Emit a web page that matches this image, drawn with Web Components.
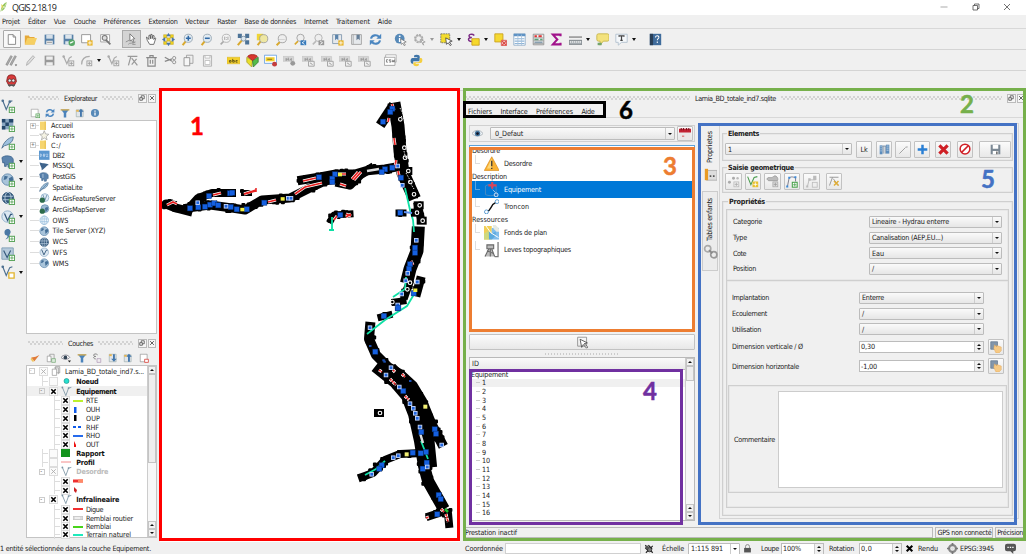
<!DOCTYPE html>
<html lang="fr">
<head>
<meta charset="utf-8">
<title>QGIS 2.18.19</title>
<style>
html,body{margin:0;padding:0;background:#fff;overflow:hidden}
body{width:1029px;height:554px;font:7.2px/9px "DejaVu Sans Condensed","DejaVu Sans","Liberation Sans",sans-serif;color:#222}
</style>
</head>
<body>
<qgis-window></qgis-window>
<script>
const I = {
new:'<path d="M4 2h6l3 3v9H4z" fill="#fff" stroke="#777"/><path d="M10 2v3h3" fill="none" stroke="#777"/>',
open:'<path d="M1 3h5l1 2h6v9H1z" fill="#e6a93a"/><path d="M1 14l3-8h12l-3 8z" fill="#f6cf62"/>',
save:'<path d="M2 2h12v12H2z" fill="#5780a8"/><path d="M4 2h8v5H4z" fill="#d5dfe8"/><path d="M4 9.500h8V14H4z" fill="#e8e8e8"/><path d="M5 11.500h6" stroke="#888"/>',
savegray:'<path d="M2 2h12v12H2z" fill="#999"/><path d="M4 3h8v4H4zM4 10h8v4H4z" fill="#eee"/>',
saveas:'<path d="M2 2h12v12H2z" fill="#5780a8"/><path d="M4 2h8v5H4zM4 10h7v4H4z" fill="#dde5ec"/><circle cx="12" cy="12" r="4" fill="#58a866"/><path d="M10 12.500l4-2" stroke="#fff" stroke-width="1.500"/>',
layout:'<path d="M2 2h11v10H2z" fill="#fff" stroke="#888"/><rect x="9" y="9" width="6.500" height="6.500" fill="#e9b62e"/><path d="M12.200 10v4.500M10 12.200h4.500" stroke="#fff"/>',
composer:'<path d="M2 2h11v9H2z" fill="#fff" stroke="#999"/><path d="M6 6l8 8" stroke="#777" stroke-width="2.200"/><circle cx="7" cy="6" r="3" fill="#ddd" stroke="#777" stroke-width="1.300"/>',
pan0:'<path d="M6 1l6 6-2.500.3L11 11l-1.500.7L8 8.500 6 10z" fill="#fff" stroke="#666"/><path d="M1 11l4-2M4 14c2-3 5 0 9-3M9 14h4" stroke="#888" fill="none"/>',
hand:'<path d="M4 9L3 5l1.500 1L6 8V3l1.500-.5L8 7l.5-5.500L10 2v5l1-4 1.500.5L12 8l1.500-2 1 .5L12 14H7z" fill="#fff" stroke="#444" stroke-width=".9"/>',
pansel:'<path d="M2 2h4v4H2zM10 2h4v4h-4zM6 6h4v4H6zM2 10h4v4H2zM10 10h4v4h-4z" fill="#f0d21c" stroke="#b5981a" stroke-width=".5"/><path d="M8 0l3 4H5zM8 16l3-4H5zM0 8l4-3v6zM16 8l-4-3v6z" fill="#4b77a9"/>',
zin:'<path d="M6 10l-4 5" stroke="#d9a92e" stroke-width="2.500"/><circle cx="9" cy="6.500" r="5" fill="#e2ebf2" stroke="#90a0ad"/><path d="M9 3.500v6M6 6.500h6" stroke="#3069a6" stroke-width="1.900"/>',
zout:'<path d="M6 10l-4 5" stroke="#d9a92e" stroke-width="2.500"/><circle cx="9" cy="6.500" r="5" fill="#e2ebf2" stroke="#90a0ad"/><path d="M6 6.500h6" stroke="#3069a6" stroke-width="1.900"/>',
z11:'<path d="M6 10l-4 4" stroke="#aaa" stroke-width="2"/><circle cx="9" cy="6.500" r="5" fill="#f2f2f2" stroke="#aaa"/><path d="M7 4.500v4M11 4.500v4M9 5v1M9 7.500v1" stroke="#999"/>',
zfull:'<path d="M1 1h5v5H1zM10 1h5v5h-5zM10 9h5v5h-5z" fill="#4d7397"/><path d="M6 9l-5 6" stroke="#d9a92e" stroke-width="2.500"/><circle cx="8" cy="7" r="3" fill="#dce7ef" stroke="#72899c"/>',
zsel:'<path d="M6 10l-4 5" stroke="#d9a92e" stroke-width="2.500"/><rect x="1" y="1" width="8" height="8" fill="#efd535"/><circle cx="9.500" cy="7" r="5" fill="#eee7a2" stroke="#999"/>',
zlayer:'<path d="M6 11l-4 4" stroke="#d9a92e" stroke-width="2.500"/><circle cx="9" cy="7" r="5" fill="#eee" stroke="#999"/><path d="M5 8h7" stroke="#ccc"/>',
zlast:'<path d="M5 10l-4 4" stroke="#d9a92e" stroke-width="2"/><circle cx="8" cy="6" r="4.500" fill="#eee" stroke="#999"/><path d="M8 9h7v6H8z" fill="#387bbb"/><path d="M13 10l-3 2 3 2" stroke="#fff" fill="none"/>',
znext:'<path d="M5 10l-4 4" stroke="#bbb" stroke-width="2"/><circle cx="8" cy="6" r="4.500" fill="#eee" stroke="#aaa"/><path d="M8 9h7v6H8z" fill="#999"/><path d="M10 10l3 2-3 2" stroke="#fff" fill="none"/>',
bm:'<path d="M2 2h11v11H2z" fill="#e6e9ec" stroke="#7b93aa"/><path d="M5 2v7l2-2 2 2V2z" fill="#5b83ab"/><rect x="9" y="9" width="6.500" height="6.500" fill="#e9b62e"/><path d="M12.200 10v4.500M10 12.200h4.500" stroke="#fff"/>',
bm2:'<path d="M2 2h12v12H2z" fill="#e6e9ec" stroke="#999"/><path d="M8 2v7l2-2 2 2V2z" fill="#667f97"/><path d="M4 2v12" stroke="#aaa"/>',
refresh:'<path d="M2.500 7a5.500 5 0 0 1 10-2M13.500 9a5.500 5 0 0 1-10 2" fill="none" stroke="#4b86c0" stroke-width="2.600"/><path d="M15 1v6H9zM1 15V9h6z" fill="#4b86c0"/>',
info:'<circle cx="7" cy="7" r="6" fill="#5689b8"/><path d="M7 6v5M7 3v2" stroke="#fff" stroke-width="2"/><path d="M8 7l7 4-3 .8 2 3-1.500.7-1.600-3L9 14z" fill="#fff" stroke="#666" stroke-width=".8"/>',
info2:'<circle cx="8" cy="8" r="6.500" fill="#5689b8"/><path d="M8 7v5M8 4v2" stroke="#fff" stroke-width="2"/>',
gear:'<circle cx="7" cy="7" r="4.500" fill="#ddd" stroke="#aaa" stroke-width="2.500" stroke-dasharray="2.500 1"/><circle cx="7" cy="7" r="3.500" fill="#eee" stroke="#aaa"/><path d="M9 8l6 3-3 1 1 3z" fill="#fff" stroke="#999"/>',
sel:'<path d="M1 1h11v11H1z" fill="#f3dc2d" stroke="#666" stroke-dasharray="2 1"/><path d="M7 6l8 4-3.500 1 2.500 3.500-1.500 1-2.500-3.500L8 14z" fill="#fff" stroke="#333" stroke-width=".9"/>',
eps:'<path d="M9 3C6 0 1 2 3 4.500c1 1 3 1 3 1-6 0-5 5 0 5" fill="none" stroke="#7b2b85" stroke-width="1.800"/><path d="M6 7h9v8H6z" fill="#f6d82c" stroke="#c99d16"/>',
unsel:'<path d="M1 1h10v10H1z" fill="#f5d933" stroke="#c99d16"/><path d="M9 9h6.500v6.500H9z" fill="#f2c9c9" stroke="#d9453f"/><path d="M10 10l5 5M15 10l-5 5" stroke="#d9453f" stroke-width="1.300"/>',
table:'<path d="M1 1h14v14H1z" fill="#fff" stroke="#88a8c6"/><path d="M1 2.500h14" stroke="#5e92c4" stroke-width="3"/><path d="M2 7h12M2 10h12M2 13h12" stroke="#8db4d8" stroke-width="1.300"/><path d="M6 2v13M10.500 2v13" stroke="#a8c2da"/>',
calc:'<path d="M1.500 1.500h13v13h-13z" fill="#eee" stroke="#888"/><path d="M3 4h3M8 4h4" stroke="#d33" stroke-width="2.500"/><path d="M2 6h12M2 9.500h12M2 13h12" stroke="#888" stroke-width=".8"/><path d="M3 8h5M10 8h3" stroke="#5aa47a" stroke-width="2"/><path d="M3 11.500h10" stroke="#8aa0b0" stroke-width="2"/>',
sigma:'<path d="M13 4V2H3.500L9 8l-5.500 6H13v-2" fill="none" stroke="#a1138b" stroke-width="2.500"/>',
ruler:'<path d="M0 9h16v5H0z" fill="#aab1b5" stroke="#747b80"/><path d="M0 5h16" stroke="#7b7b7b" stroke-width="1.500"/><path d="M2 10v2M4.500 10v2M7 10v2M9.500 10v2M12 10v2M14 10v2" stroke="#fff"/>',
tip:'<path d="M3 1h11a2 2 0 0 1 2 2v5a2 2 0 0 1-2 2H9l-4 5v-5H3a2 2 0 0 1-2-2V3a2 2 0 0 1 2-2z" fill="#f3e27d" stroke="#c3b144"/><path d="M2 12h5v3H2z" fill="#72a36c"/>',
text:'<path d="M1 1.500h14v10H8L4 15v-3.500H1z" fill="#f4f7fa" stroke="#adbccb"/><path d="M5 4.500V3.500h6v1M8 3.500V9M6.500 9h3" stroke="#444" stroke-width="1.500" fill="none"/>',
help:'<path d="M1 1h14v14H1z" fill="#3f6c9c"/><path d="M1 1h4v14H1z" fill="#293f57"/><path d="M8 5.500c0-3 5-2.500 4 .5-.5 1-1.800 1-1.800 3M10.200 10.500v1.700" fill="none" stroke="#fff" stroke-width="1.300"/>',
pens:'<path d="M1 13L7 2l2 1-6 11zM6 13l6-11 2 1-6 11z" fill="#aaa" stroke="#777" stroke-width=".6"/><path d="M12 13h3l-1.500 2z" fill="#555"/>',
pen:'<path d="M3 14l1-4 7-8 2 2-7 8z" fill="#ddd" stroke="#aaa"/>',
addg:'<path d="M2 3l4 9 3-7 3-2" fill="none" stroke="#aaa" stroke-width="1.500"/><circle cx="2" cy="3" r="1.500" fill="#aaa"/><rect x="8.500" y="8.500" width="6" height="6" fill="#eee" stroke="#999"/><path d="M11.500 9.500v4M9.500 11.500h4" stroke="#999"/>',
curve:'<path d="M2 13C2 6 5 3 12 3" fill="none" stroke="#aaa" stroke-width="1.500"/><rect x="8.500" y="8.500" width="6" height="6" fill="#eee" stroke="#999"/><path d="M11.500 9.500v4M9.500 11.500h4" stroke="#999"/>',
node:'<path d="M3 14L6 3M2 3h12M7 5l7 9M13 6l-6 7" fill="none" stroke="#999" stroke-width="1.500"/>',
trash:'<path d="M3.500 4.500h9V15h-9zM1.500 4.500h13M6 4V2h4v2M6.500 7v5M9.500 7v5" fill="none" stroke="#888" stroke-width="1.400"/>',
cut:'<path d="M1 4l9 5M1 9l9-3" stroke="#888" stroke-width="1.500"/><circle cx="12.500" cy="5" r="2" fill="none" stroke="#888"/><circle cx="12.500" cy="10" r="2" fill="none" stroke="#888"/>',
copy:'<path d="M5.500 1.500h8v10h-8z" fill="#eee" stroke="#999"/><path d="M2.500 4.500h7v10h-7z" fill="#f6f6f6" stroke="#888"/>',
paste:'<path d="M3 2h10v13H3z" fill="#eee" stroke="#aaa"/><path d="M5 2h6v3H5zM5 8h6v5H5z" fill="#fff" stroke="#bbb"/>',
lab:'<path d="M0 4h16v8H0z" fill="#f3cf2b" stroke="#d3b01c" stroke-width=".6"/><path d="M3 8h2v2H3zM7 6v4h2V8H7M13 8h-2v2h2" fill="none" stroke="#544a18"/>',
pie:'<path d="M8 8L1 4v6l6 6z" fill="#e9de2c" stroke="#aaa12a"/><path d="M8 8l7-4v6l-6 6z" fill="#53bb49" stroke="#397d31"/><path d="M8 8L2 3c2-3 10-3 12 0z" fill="#d8362d" stroke="#9d2620"/>',
lab2:'<path d="M.5 1.500h15v10H.5z" fill="#fff" stroke="#5d9ae0"/><path d="M2 4h11v5H2z" fill="#f1cf2c"/><path d="M4 6.500h6" stroke="#6b5d13"/><circle cx="13" cy="12.500" r="3" fill="#c43c3c"/>',
labg:'<path d="M0 3h13v6H0z" fill="#d5d5d5" stroke="#bbb" stroke-width=".6"/><path d="M3 6h2v1.500H3M6.500 4.500v3h1.500M11 6H9.500v1.500H11" fill="none" stroke="#888"/><circle cx="12" cy="11.500" r="3" fill="#999"/>',
labh:'<path d="M0 3h13v6H0z" fill="#d5d5d5" stroke="#bbb" stroke-width=".6"/><path d="M3 6h2v1.500H3M6.500 4.500v3h1.500M11 6H9.500v1.500H11" fill="none" stroke="#888"/><path d="M8 9h7v6H8z" fill="#eee" stroke="#999"/><path d="M10 11l3 2" stroke="#888"/>',
csw:'<path d="M2 1h13v9H2z" fill="#fff" stroke="#aaa"/><path d="M.5 4h13v10H.500z" fill="#fff" stroke="#999"/><path d="M5 7H3v3h2M8.500 7h-2v1.500h2V10h-2M10 7l.8 3 .8-2 .8 2 .6-3" fill="none" stroke="#555" stroke-width=".8"/>',
py:'<path d="M8 1c-3 0-3 1-3 3h4v1H3C0 5 0 12 3 12h1V9h6c2 0 2-1 2-5 0-2-1-3-4-3z" fill="#3f75a8"/><path d="M8 15c3 0 3-1 3-3H7v-1h6c3 0 3-7 0-6h-1v3c0 1-1 2-2 2H6c-2 0-2 1-2 2 0 2 1 3 4 3z" fill="#f4cf41"/>',
robot:'<path d="M3 4c1-4 9-4 10 0l1 5-2 4H4L2 9z" fill="#d83a3a" stroke="#7b1c1c"/><circle cx="5.800" cy="8" r="1.900" fill="#eee" stroke="#333" stroke-width=".8"/><circle cx="10.200" cy="8" r="1.900" fill="#eee" stroke="#333" stroke-width=".8"/><path d="M4 13l1 2 3-1 3 1 1-2" stroke="#333" fill="#777"/>',
vplus:'<path d="M2 2l4 10 4-9 3-1" fill="none" stroke="#4c6f8f" stroke-width="1.300"/><circle cx="2" cy="2" r="1.500" fill="#4c6f8f"/><circle cx="10" cy="3" r="1.500" fill="#4c6f8f"/>#P',
raster:'<path d="M1 1h13v12H1z" fill="#8aa7c2"/><path d="M1 1h4v4H1zM9 1h5v4H9zM5 5h4v4H5zM1 9h4v4H1z" fill="#24476b"/>#P',
feather:'<path d="M1 14C3 7 8 2 14 1c0 5-4 9-10 10z" fill="#9ec1de" stroke="#4c6f8f"/><path d="M1 15L12 3" stroke="#4c6f8f"/>',
featherp:'<path d="M1 14C3 7 8 2 14 1c0 5-4 9-10 10z" fill="#9ec1de" stroke="#4c6f8f"/>#P',
eleph:'<path d="M1 3c3-3 12-3 13 2v5h-2l-1 4H8v-3H6v2H4V9H2z" fill="#5b83ad" stroke="#375f88" stroke-width=".8"/><path d="M6 3v6" stroke="#cfe0ee"/>',
elephp:'<path d="M1 3c3-3 12-3 13 2v5h-2l-1 4H8v-3H6v2H4V9H2z" fill="#5b83ad" stroke="#375f88" stroke-width=".8"/>#P',
globe:'<circle cx="8" cy="8" r="6.700" fill="#a9c4da" stroke="#5d86ab"/><path d="M4 3l4 1-2 3-3 1zM9 6l4-2 1 4-4 4z" fill="#456f97"/>',
globep:'<circle cx="7.500" cy="7.500" r="6.500" fill="#a9c4da" stroke="#5d86ab"/><path d="M4 3l4 1-2 3-3 1zM9 6l4-2 1 4-4 4z" fill="#456f97"/>#P',
wcs:'<circle cx="8" cy="8" r="6.500" fill="#34587b" stroke="#34587b"/><path d="M2 6h12M2 10h12M8 2v12" stroke="#b9cee0"/><ellipse cx="8" cy="8" rx="3.500" ry="6.500" fill="none" stroke="#b9cee0"/>',
wcsp:'<circle cx="8" cy="8" r="6.500" fill="#34587b" stroke="#34587b"/><path d="M2 6h12M2 10h12" stroke="#b9cee0"/><ellipse cx="8" cy="8" rx="3.500" ry="6.500" fill="none" stroke="#b9cee0"/>#P',
ows:'<circle cx="8" cy="8" r="6.500" fill="#edf5fb" stroke="#8fb6d6"/><path d="M2 6h12M2 10h12M8 2v12" stroke="#9cc0dd"/><ellipse cx="8" cy="8" rx="3.500" ry="6.500" fill="none" stroke="#9cc0dd"/>',
wfs:'<circle cx="8" cy="8" r="6.500" fill="#dce8f2" stroke="#8aabc7"/><path d="M4 4l3.500 8L11 5h2" fill="none" stroke="#34587b" stroke-width="1.400"/>',
wfsp:'<circle cx="7.500" cy="7.500" r="6.500" fill="#dce8f2" stroke="#8aabc7"/><path d="M4 4l3.500 8L11 5h2" fill="none" stroke="#34587b" stroke-width="1.400"/>#P',
comma:'<path d="M4 5a3.500 3.500 0 1 1 6 2c0 3-2 5-5 6 2-2 3-3 2-4.500C5 8.500 4 7 4 5z" fill="#4b78a5"/>#P',
vl:'<path d="M1 1h13v13H1z" fill="#b5cadb" stroke="#7d9bb4"/><path d="M3 4l4 8 4-8" fill="none" stroke="#34587b" stroke-width="1.300"/>#P',
vy:'<path d="M2 2l4 10 4-9 3-1" fill="none" stroke="#4c6f8f" stroke-width="1.300"/><circle cx="2" cy="2" r="1.500" fill="#4c6f8f"/><path d="M9 9h6v6H9z" fill="#fff" stroke="#e2b42d" stroke-width="1.500"/>',
pg:'<path d="M2 2h11v12H2z" fill="#fff" stroke="#999"/>#P',
funnel:'<path d="M1 2h14l-5 6v7H6V8z" fill="#4b83bb"/><path d="M1 2h14v2H1z" fill="#e0b04b"/>',
collapse:'<path d="M2 3h11v11H2z" fill="#e2e6ea" stroke="#9aa"/><path d="M8 14V6H5l4.500-5L14 6h-3v8z" fill="#4477ab"/><path d="M2 3h4v3H2z" fill="#e6b54f"/>',
expand:'<path d="M2 2h11v12H2z" fill="#e2e6ea" stroke="#9aa"/><path d="M8 2v7H5l4.500 5L14 9h-3V2z" fill="#4477ab"/><path d="M2 2h4v3H2z" fill="#e6b54f"/>',
folder:'<path d="M2 1h11v14H2z" fill="#f6d56f"/><path d="M11 1h3v14h-3z" fill="#ecc75c"/>',
star:'<path d="M8 1l2 5 5 .5-4 3.500 1.300 5L8 12l-4.300 3L5 10 1 6.500 6 6z" fill="#f5f3e4" stroke="#999"/>',
db2:'<path d="M0 1h16v14H0z" fill="#5b97cf"/><path d="M2 6v4c3 0 3-4 0-4zM7 6v4c3 0 3-2 0-2 3 0 3-2 0-2zM11 6.500c3-1 3 1 0 3.500h3" stroke="#cfe2f4" fill="none"/>',
mssql:'<path d="M1 2c4 3 9 0 14 4-4 0-5 5-11 8 1-4-3-7-3-12z" fill="#3f648c"/>',
arcf:'<circle cx="9" cy="7" r="6" fill="#e2edf5" stroke="#7ba0c0"/><path d="M6 3l3 8 3-8" stroke="#456f97" fill="none"/><circle cx="5" cy="11" r="4" fill="#2d6c4c"/>',
arcm:'<circle cx="9" cy="7" r="6" fill="#9dbbd3" stroke="#5d86ab"/><path d="M9 6l4-2 1 4-4 4z" fill="#456f97"/><circle cx="5" cy="11" r="4" fill="#2d6c4c"/>',
brush:'<path d="M2 7l5 6 8-10-6 3z" fill="#e07b39"/><path d="M2 7l5 6-3 1-3-4z" fill="#f0c25c"/>',
group:'<path d="M6 2h7v9H6z" fill="#eee" stroke="#888"/><path d="M2 5h6v9H2z" fill="#fff" stroke="#888"/><path d="M9 9h6v6H9z" fill="#dcebdc" stroke="#68a068"/>',
grp:'<path d="M7 1h7v10H7z" fill="#eee" stroke="#888"/><path d="M2 5h7v10H2z" fill="#fff" stroke="#888"/><path d="M5 3h7v10" fill="none" stroke="#999"/>',
eye:'<path d="M0 8c4-6 12-6 16 0-4 5-12 5-16 0z" fill="#f3f6f8" stroke="#8d99a3"/><circle cx="8" cy="8" r="4" fill="#47789f"/><circle cx="8" cy="8" r="2" fill="#112"/>',
eyed:'<path d="M0 7c4-5 11-5 14 0-3 4-10 4-14 0z" fill="#fff" stroke="#556"/><circle cx="7" cy="7" r="3" fill="#345"/><path d="M11 12h5l-2.500 3z" fill="#222"/>',
expr:'<path d="M9 3C6 0 1 2 3 4.500c1 1 3 1 3 1-5 0-4 4 0 4" fill="none" stroke="#777" stroke-width="1.400"/><path d="M8 9h6v6H8z" fill="#eee" stroke="#a78bb0"/>',
rem:'<path d="M2 2h11v12H2z" fill="#fff" stroke="#888"/><path d="M9 10h6v5H9z" fill="#fff" stroke="#d9453f" stroke-width="1.300"/>',
v:'<path d="M2 2l5 12L11 3l4-1" fill="none" stroke="#7892a2" stroke-width="1.200"/><circle cx="2" cy="2" r="1.300" fill="#7892a2"/><circle cx="11" cy="3" r="1.300" fill="#7892a2"/>',
x:'<path d="M3 3l10 10M13 3L3 13" stroke="#000" stroke-width="3.600"/>',
xg:'<path d="M3 3l10 10M13 3L3 13" stroke="#aaa" stroke-width="2"/>',
xs:'<path d="M3 3l10 10M13 3L3 13" stroke="#333" stroke-width="2"/>',
flo:'<path d="M2 7h7v7H2z" fill="#eee" stroke="#333" stroke-width="1.800"/><path d="M6 6V2h8v8h-4" fill="none" stroke="#333" stroke-width="1.800"/>',
warn:'<path d="M8 .8L15.700 15H.3z" fill="#f9b233" stroke="#d98a1b" stroke-width=".7"/><path d="M8 2.500L3 13h5z" fill="#fdd77a"/><path d="M8 5v5.500M8 12v1.500" stroke="#333" stroke-width="1.300"/>',
equip:'<path d="M1.500 4c3-2 8-2 11 0v9c-3 1.500-8 1.500-11 0z" fill="none" stroke="#5590c0" stroke-width=".8"/><path d="M8.500 0v7M4.500 3.500h8.500" stroke="#d9455a" stroke-width="2.200"/><circle cx="12.500" cy="13.300" r="2" fill="#2978c7" stroke="#cfe4f7"/><path d="M9 8l3 3" stroke="#9cc3e6"/>',
tron:'<path d="M3 13C8 12 6 6 13 3" fill="none" stroke="#111" stroke-width="1.600"/><circle cx="2.500" cy="13.300" r="2" fill="#fff" stroke="#5a9bd0"/><circle cx="13.500" cy="2.700" r="2" fill="#fff" stroke="#5a9bd0"/>',
map:'<path d="M0 1h8v14H0z" fill="#f2cf56"/><path d="M8 3h8v12H8z" fill="#7fbdec"/><path d="M9 0h3l4 4v3h-3l-3-3z" fill="#e4e9e4"/><path d="M4 6l4 3 4-2v4l-4 4H5z" fill="#5aa9dd"/><path d="M0 9l5-3v9H0z" fill="#cfd97e"/><path d="M2 1l5 7 8 5" stroke="#fff" fill="none"/>',
topo:'<path d="M1 15L5 7h3l3 8M6.500 7v8M3 9l7 3M3 3h7v4H3z" stroke="#666" stroke-width="1.100" fill="#bbb"/><path d="M14.500 0v15H11" stroke="#777" stroke-width="1.300" fill="none"/>',
cal:'<path d="M1 1h14v14H1z" fill="#ebe6e6"/><path d="M0 1h16v5H0z" fill="#c32232"/><path d="M3 0v3M6 0v3M10 0v3M13 0v3" stroke="#7c1420" stroke-width="1.400"/><path d="M4 10h3v2H4z" fill="#d88"/>',
cursor:'<path d="M2 1.500h11v11H2z" fill="none" stroke="#888" stroke-width="1"/><path d="M5 4l9 4.500-4 1 4.500 4-1.500 1.500-4-4.500-2 3.500z" fill="#fff" stroke="#444"/>',
hilite:'<path d="M1 2h4v13H1z" fill="#5b8cbc"/><path d="M10 1h5v13h-5z" fill="#5b8cbc"/><path d="M2 4h2M2 7h2M2 10h2M11 3h3M11 6h3M11 9h3" stroke="#dbe6f0"/><path d="M5 3h5M6 14V3M9 14V3" stroke="#6f87a0" fill="none" stroke-width="1.300"/>',
line:'<path d="M2 14L11 5" stroke="#999" stroke-width="1.300"/><path d="M11 5l3-1" stroke="#bbb" stroke-width="2"/>',
plus:'<path d="M8 1v14M1 8h14" stroke="#2a7fd4" stroke-width="3.600"/>',
del:'<path d="M2 2l12 12M14 2L2 14" stroke="#cf1f25" stroke-width="4.600"/>',
forbid:'<circle cx="8" cy="8" r="6.500" fill="#fff" stroke="#d01f26" stroke-width="2"/><path d="M3.500 12.500l9-9" stroke="#d01f26" stroke-width="2"/>',
floppy:'<path d="M1 1h14v14H1z" fill="#7b8894"/><path d="M4 1h8v6H4zM4 10h8v5H4z" fill="#fff"/><path d="M9 11h2v4H9z" fill="#555"/>',
pts:'<circle cx="3" cy="9" r="1.800" fill="#aaa"/><circle cx="8" cy="4" r="1.800" fill="#aaa"/><circle cx="13" cy="4" r="1.500" fill="#bbb"/><rect x="8.500" y="8.500" width="6" height="6" fill="#eee" stroke="#bbb"/><path d="M11.500 9.500v4M9.500 11.500h4" stroke="#aaa"/>',
vg:'<path d="M2 2l4 10 4-9 4-1" fill="none" stroke="#4a9b4e" stroke-width="1.300"/><rect x="8" y="8" width="7" height="7" fill="#e9c12e"/><path d="M11.500 9v5M9 11.500h5" stroke="#fff"/>',
poly:'<path d="M1 5c2-4 5 0 8-3s7 2 5 5H3z" fill="#bbb" stroke="#999"/><rect x="8.500" y="8.500" width="6" height="6" fill="#ddd" stroke="#aaa"/><path d="M11.500 9.500v4M9.500 11.500h4" stroke="#999"/>',
addl:'<path d="M3 14L5 4C8 1 10 3 13 3v5" fill="none" stroke="#667" stroke-width="1"/><path d="M1.500 13h2.500v2.500H1.500zM4 2h2.500v2.500H4zM11.500 1.500H14V4h-2.500z" fill="#3b8ad9"/><rect x="9" y="9" width="6" height="6" fill="#fff" stroke="#48a04b" stroke-width="1.300"/><path d="M12 10v4M10 12h4" stroke="#48a04b"/>',
addlg:'<path d="M3 14L5 6h8V3" fill="none" stroke="#bbb" stroke-width="1.200"/><path d="M1.500 13H4v2.500H1.500zM4 4h3v3H4zM10 1h4v5h-4z" fill="#bbb"/><rect x="9" y="9" width="6" height="6" fill="#eee" stroke="#bbb"/>',
nodey:'<path d="M2 14L6 3M2 3h12M7 5l7 9" fill="none" stroke="#999" stroke-width="1.300"/><path d="M8 8l6 6M14 8l-6 6" stroke="#e0ad35" stroke-width="2"/>',
tap:'<path d="M1 1h9v10H1z" fill="#8296ab" stroke="#687b8f"/><path d="M6 5l3 3V6l6 2v5l-3 3H8L5 10z" fill="#f6c984" stroke="#dfa558" stroke-width=".6"/>',
chain:'<circle cx="5" cy="5" r="3.300" fill="none" stroke="#aaa" stroke-width="1.800"/><circle cx="11.500" cy="11.500" r="3.300" fill="none" stroke="#999" stroke-width="1.800"/><path d="M6.500 6.500L10 10" stroke="#888" stroke-width="2"/>',
tabi:'<path d="M3 3h13v12H3z" fill="#ddd" stroke="#aaa"/><path d="M1 1h4v14H1z" fill="#e99b23"/><path d="M7 9h2v2H7zM11 9h2v2h-2z" fill="#555"/>',
bug:'<path d="M2 2l12 12M2 6l5 5M7 2l6 6M14 3L3 14" stroke="#222" stroke-width="1.700"/><circle cx="9" cy="9" r="3.500" fill="#777" stroke="#111"/><circle cx="5" cy="5" r="2.500" fill="#555"/>',
lock:'<path d="M2 7h12v8H2z" fill="#555"/><path d="M4.500 7V4.500a3.500 3.500 0 0 1 7 0V7" fill="none" stroke="#888" stroke-width="1.700"/>',
crs:'<circle cx="8" cy="8" r="5" fill="none" stroke="#888" stroke-width="3.200"/><circle cx="8" cy="8" r="2" fill="#ddd"/><path d="M8 0v4M8 12v4M0 8h4M12 8h4" stroke="#777" stroke-width="2.500"/>',
bubble:'<path d="M3 1h10a3 3 0 0 1 3 3v5a3 3 0 0 1-3 3h-1v4l-4-4H3a3 3 0 0 1-3-3V4a3 3 0 0 1 3-3z" fill="#555"/><path d="M3.500 6.500h2M7 6.500h2M10.500 6.500h2" stroke="#fff" stroke-width="1.800"/>',
logo:'<path d="M1 15C2 8 8 2 15 0c0 6-6 13-12 13z" fill="#8cc152"/><path d="M1 15L8 6l1 3 5-7" stroke="#fff" fill="none"/><path d="M3 3l5 3-4 4z" fill="#d9d34a"/>',
min:'<path d="M1 8h14" stroke="#555"/>',
max:'<path d="M2 5h9v9H2z" fill="none" stroke="#444" stroke-width="1.500"/><path d="M5 5V2h9v9h-3" fill="none" stroke="#444" stroke-width="1.500"/>',
close:'<path d="M2 2l12 12M14 2L2 14" stroke="#444" stroke-width="1.500"/>'
};
const PLUS='<rect x="9.500" y="9.500" width="6" height="6" fill="#fff" stroke="#5aa45a" stroke-width="1.200"/><path d="M12.500 10.500v4M10.500 12.500h4" stroke="#5aa45a"/>';
const def=(name,render)=>customElements.define(name,class extends HTMLElement{
  connectedCallback(){ if(this.shadowRoot) return; this.attachShadow({mode:'open'}).innerHTML=render(this); }
});
const A=(e,n,d='')=>e.getAttribute(n)??d;
const t=(s,w,extra='')=>`<fit-text w="${w}" ${extra}>${s}</fit-text>`;
const ic=(n,s=12,h)=>`<q-icon name="${n}" size="${s}"${h?` h="${h}"`:''}></q-icon>`;

def('q-icon',e=>`<style>:host{display:inline-block;flex:none;width:${A(e,'size',12)}px;height:${A(e,'h')||A(e,'size',12)}px}svg{display:block;width:100%;height:100%}</style>
<svg viewBox="0 0 16 16" preserveAspectRatio="none">${(I[A(e,'name')]||'').replace('#P',PLUS)}</svg>`);

def('q-tool',e=>`<style>:host{display:flex;flex:none;width:${e.hasAttribute('drop')?27:18.75}px;height:100%;align-items:center}
:host([sep]){margin-left:7px}
.b{width:18.75px;height:18px;display:flex;align-items:center;justify-content:center;box-sizing:border-box}
:host([frame]) .b{border:1px solid #aaa;background:#f8f8f8;border-radius:1px}:host([down]) .b{border:1px solid #aaa;background:#d4d4d4}
i{border:2.500px solid transparent;border-top:3px solid #111;border-bottom:0;margin-left:1px}</style>
<div class="b">${ic(A(e,'name'),13)}</div>${e.hasAttribute('drop')?`<i ${A(e,'drop')=='g'?'style="border-top-color:#999"':''}></i>`:''}`);

def('q-combo',e=>`<style>:host{display:flex;box-sizing:border-box;flex:none;width:${A(e,'w')}px;height:${A(e,'h',12)}px;border:1px solid #bcbcbc;border-radius:1px;background:linear-gradient(#fafafa,#e6e6e6);align-items:center;padding-left:2px}
span{flex:1}b{width:8px;height:100%;border-left:1px solid #ccc;display:flex;align-items:center;justify-content:center}
i{border:2px solid transparent;border-top:2.500px solid #111;border-bottom:0}:host([white]){background:#fff}</style><span><slot></slot></span><b><i></i></b>`);

def('q-spin',e=>`<style>:host{display:flex;box-sizing:border-box;flex:none;width:${A(e,'w')}px;height:12px;border:1px solid #bcbcbc;background:#fff;align-items:center;padding-left:1px}
span{flex:1}b{width:8px;height:100%;background:#f0f0f0;border-left:1px solid #ccc;display:flex;flex-direction:column;gap:2px;align-items:center;justify-content:center}
i{border:2px solid transparent;border-top:2.500px solid #111;border-bottom:0}u{border:2px solid transparent;border-bottom:2.500px solid #111;border-top:0}</style><span><slot></slot></span><b><u></u><i></i></b>`);

def('q-btn',e=>`<style>:host{display:flex;box-sizing:border-box;flex:none;width:${A(e,'w',16)}px;height:${A(e,'h',17)}px;border:1px solid #c2c2c2;border-radius:1px;background:linear-gradient(#fbfbfb,#e8e8e8);align-items:center;justify-content:center}</style><slot></slot>`);

def('q-dock',e=>`<style>:host{display:flex;flex-direction:column;box-sizing:border-box;min-height:0}
.t{flex:none;height:${A(e,'th',14)}px;display:flex;align-items:center;gap:5px;padding:0 1px 0 2px}
.d{flex:1;height:4px;background:radial-gradient(circle at 1px 1px,#d2d2d2 .7px,transparent 1px) 0 0/4px 4px,radial-gradient(circle at 3px 3px,#d2d2d2 .7px,transparent 1px) 0 0/4px 4px}
.d.l{flex:${A(e,'l',1)} 0 0}.k{display:flex;gap:1px}.k span{width:6.500px;height:7px;border:1px solid #bbb;display:flex;align-items:center;justify-content:center;background:#f6f6f6}</style>
<div class="t"><div class="d l"></div>${t(A(e,'title'),A(e,'tw'))}<div class="d"></div><div class="k"><span>${ic('flo',6)}</span><span>${ic('xs',6)}</span></div></div><slot></slot>`);

def('q-scroll',e=>`<style>:host{display:flex;flex:none;width:9px;flex-direction:column;background:#f7f7f7;border-left:1px solid #ccc;box-sizing:border-box}
b{height:8px;display:flex;align-items:center;justify-content:center;background:#f2f2f2;border:1px solid #c5c5c5;box-sizing:border-box}
p{margin:0;flex:none;height:${A(e,'thumb')}px;background:#eee;border:1px solid #c4c4c4;box-sizing:border-box}s{flex:1}
u{border:2px solid transparent;border-bottom:2.500px solid #111;border-top:0}i{border:2px solid transparent;border-top:2.500px solid #111;border-bottom:0}</style>
<b><u></u></b><p></p><s></s><b><u></u></b><b><i></i></b>`);

def('q-group',e=>`<style>:host{display:block;position:relative;box-sizing:border-box;border:1px solid #cfcfcf;box-shadow:inset 0 0 0 .5px #e0e0e0}
.n{position:absolute;left:${A(e,'x',4)}px;top:-5px;background:#f0f0f0;padding:0 1px;font-weight:bold;line-height:9px}</style>
${e.hasAttribute('title')?`<div class="n">${t(A(e,'title'),A(e,'tw'))}</div>`:''}<slot></slot>`);

def('menu-bar',()=>{
 const m=[['Projet',18],['Éditer',18],['Vue',12],['Couche',22],['Préférences',37],['Extension',29],['Vecteur',24],['Raster',19],['Base de données',52],['Internet',24],['Traitement',34],['Aide',14]];
 return `<style>:host{display:flex;height:13px;align-items:center;gap:7.900px;padding-left:2px;border-bottom:1px solid #d8d8d8;flex:none}</style>${m.map(x=>t(...x)).join('')}`});

const bar=(h,p,items)=>`<style>:host{display:flex;flex:none;height:${h}px;box-sizing:border-box;border-bottom:1px solid #d4d4d4;padding-left:2.600px;align-items:center}</style>`+items.map(i=>{const[n,...r]=i.split(' ');return`<q-tool name="${n}" ${r.join(' ')}></q-tool>`}).join('');
def('main-toolbar',()=>bar(21,0,['new frame','open','save','saveas','layout','composer','pan0 sep down','hand','pansel','zin','zout','z11','zfull','zsel','zlayer','zlast','znext','bm','bm2','refresh','info sep','gear drop=g','sel drop','eps drop','unsel','table','calc','sigma','ruler drop','tip','text drop','help sep']));
def('edit-toolbar',()=>bar(21,0,['pens','pen','savegray','addg','curve drop','addg','node','trash','cut','copy','paste','lab sep','pie','lab2','labg','labh','labh','labh','labh','csw sep','py sep']));
def('extra-toolbar',()=>bar(20,0,['robot']));

def('layer-strip',()=>`<style>:host{display:flex;flex-direction:column;width:26px;flex:none;padding-top:6px;box-sizing:border-box}
div{height:18.450px;display:flex;align-items:center;gap:4px;padding-left:.5px}i{border:2px solid transparent;border-top:3px solid #111;border-bottom:0}</style>
${['vplus','raster','featherp','elephp*','globep*','wcsp','wfsp*','comma','vl','vy*'].map(n=>`<div>${ic(n.replace('*',''),14)}${n.endsWith('*')?'<i></i>':''}</div>`).join('')}`);

def('explorer-tree',()=>{
 const r=[['folder','Accueil',22,9.7,1],['star','Favoris',22,9.7],['folder','C:/',10,9.7,1],['db2','DB2',12,10.5],['mssql','MSSQL',22],['eleph','PostGIS',23],['feather','SpatiaLite',30],['arcf','ArcGisFeatureServer',63],['arcm','ArcGisMapServer',53],['ows','OWS',16],['globe','Tile Server (XYZ)',53],['wcs','WCS',15],['wfs','WFS',15],['globe','WMS',16]];
 return `<style>:host{display:block;flex:1;background:#fff;border:1px solid #c4c4c4;box-sizing:border-box;min-height:0}
 .r{display:flex;align-items:center;padding-left:3px}.e{width:9px;height:100%;display:flex;align-items:center;font-size:5px}.e b{width:4px;height:4px;border:1px solid #ccc;line-height:3.500px;color:#777}.e:after{content:"";flex:1;border-top:1px solid #ddd}fit-text{margin-left:3px}</style>`+
 r.map(x=>`<div class="r" style="height:${x[3]||10.83}px"><div class="e">${x[4]?'<b>+</b>':''}</div>${ic(x[0],x[4]?8:10.5,x[4]?9.500:10.5)}${t(x[1],x[2],x[4]?'style="margin-left:4px"':'')}</div>`).join('')});

def('layers-tree',()=>{
 const L=(c,s='')=>`<svg viewBox="0 0 10 6" width="10" height="6">${c}</svg>`;
 const ln=c=>L(`<path d="M0 3h10" stroke="${c}" stroke-width="1.800"/>`);
 const r=[[10.3,0,'xg','<q-icon name="grp" size="10"></q-icon>','Lamia_BD_totale_ind7.s...',79,'e'],
 [10,1,'n',L('<circle cx="5.500" cy="3" r="2.500" fill="#27e0d0" stroke="#178c85" stroke-width=".6"/>'),'Noeud',22,'b'],
 [10,1,'x',ic('v',11),'Equipement',40,'beh'],
 [9,2,'x',ln('#b5f016'),'RTE',12],[8.7,2,'x',L('<path d="M1 0h2.500v6H1z" fill="#0f5bea"/>'),'OUH',14],[8.7,2,'x',L('<path d="M1 0h2.500v6H1z" fill="#000"/>'),'OUP',14],
 [8.7,2,'x',L('<path d="M0 3h3M5 3h3" stroke="#0f5bea" stroke-width="1.800"/>'),'RHF',13],[8.7,2,'x',ln('#0f5bea'),'RHO',14],[8.7,2,'x',L('<path d="M1 0l2 4v2H1z" fill="#e11"/>'),'OUT',13],
 [8.7,1,'n','<svg width="10" height="8"><path d="M0 0h9v8H0z" fill="#12931d"/></svg>','Rapport',28,'b'],[9.3,1,'n',L('<path d="M0 3h10" stroke="#f07070" stroke-width=".8"/>'),'Profil',18,'b'],
 [9.7,1,'xg',ic('v',11),'Desordre',32,'bge'],[9.3,2,'x',L('<path d="M0 1.500h10v3H0z" fill="#ef3030"/><path d="M5 1.500h5v3H5z" fill="#ff8a66"/>'),'',0],[8.7,2,'x',L('<path d="M1 0l3 3-1 3-2-2z" fill="#c22"/>'),'',0],
 [10.3,1,'x',ic('v',11),'Infralineaire',43,'be'],[9.2,2,'x',ln('#f01818'),'Digue',17],[8.6,2,'x',L('<path d="M0 1.500h10v3H0z" fill="#ddd" stroke="#aaa" stroke-width=".5"/><path d="M2 3h5" stroke="#fff"/>'),'Remblai routier',47],[8.6,2,'x',ln('#35d000'),'Remblai',25],[7.5,2,'x',ln('#05e8b4'),'Terrain naturel',45]];
 return `<style>:host{display:flex;flex:1;background:#fff;border:1px solid #c4c4c4;box-sizing:border-box;min-height:0}.c{flex:1}
 .r{display:flex;align-items:center;box-sizing:border-box}.h{background:#f0f0f0}.h fit-text{text-decoration:underline}.b{font-weight:bold;color:#111}.g{color:#bbb}
 .q{width:4px;height:4px;border:1px solid #ccc;font-size:5px;line-height:3px;color:#888;margin-right:4px;flex:none}.nq{width:10px;flex:none;height:100%;background:linear-gradient(#ddd,#ddd) 3px 0/1px 100% no-repeat,linear-gradient(#ddd,#ddd) 4px 50%/5px 1px no-repeat}
 .k{width:7px;height:7px;border:1px solid #ddd;background:#fbfbfb;display:flex;align-items:center;justify-content:center;flex:none}.s{width:12px;display:flex;justify-content:center;margin:0 2px;flex:none}</style><div class="c">`+
 r.map(([h,l,k,s,n,w,f=''])=>`<div class="r ${f.includes('h')?'h':''} ${f.includes('b')?'b':''} ${f.includes('g')?'g':''}" style="height:${h}px;padding-left:${[2,12.3,23.5][l]}px">${f.includes('e')?'<div class="q">-</div>':'<div class="nq"></div>'}<div class="k">${k=='n'?'':ic(k,7)}</div><div class="s">${s}</div>${w?t(n,w,`style="margin-left:${[1,2,.5][l]}px"`):''}</div>`).join('')+`</div><q-scroll thumb="89"></q-scroll>`});

def('tool-row',e=>`<style>:host{display:flex;flex:none;height:${A(e,'h',14)}px;align-items:center;gap:${A(e,'gap',4.5)}px;padding-left:4px}</style>${A(e,'icons').split(' ').map(n=>ic(n,A(e,'s',10))).join('')}`);

def('map-canvas',()=>{
 let seed=7;const rnd=()=>(seed=(seed*16807)%2147483647)/2147483647;
 const P=[[[395,108],[398,125],[400,150],[403,172],[412,192],13],[[383,120],[391,108],10],[[402,165],[385,168],[365,170],[345,176],9],
 [[172,204],[166,203],[176,207],[188,210],9],[[188,208],[198,197],[212,192],[232,192],8],[[188,207],[210,204],[232,207],[245,209],[262,199],[290,197],[308,188],[325,180],[350,175],9],
 [[302,179],[320,176],[336,173],[350,173],9],[[340,182],[350,184],[360,174],[370,168],9],[[244,192],[249,192],6],[[331,219],[334,214],[350,213],7],[[399,212],[403,212],7],
 [[418,205],[421,218],8],[[418,232],[417,250],[410,268],[408,276],13],[[420,280],[417,291],9],[[409,283],[405,294],8],[[403,300],[395,301],7],[[389,314],[381,316],7],[[370,326],[369,338],[376,354],[388,366],[400,373],[413,385],[422,400],[431,422],[441,441],10],
 [[380,369],[395,381],[407,395],[414,413],[420,440],[424,465],[428,480],[441,503],12],[[395,372],[410,387],[420,405],[427,430],[430,460],13],
 [[362,476],[373,472],[385,459],[400,453],[424,452],8],[[430,515],[442,511],[448,512],[449,523],8]];
 let o='';
 for(const a of P){const w=a[a.length-1],p=a.slice(0,-1);o+=`<polyline points="${p.join(' ')}" fill="none" stroke="#000" stroke-width="${w}" stroke-linejoin="round" stroke-linecap="square"/>`;
  for(let i=1;i<p.length;i++){const[x1,y1]=p[i-1],[x2,y2]=p[i],n=Math.hypot(x2-x1,y2-y1)/2.5;
   for(let k=0;k<n;k++){const f=k/n,x=x1+(x2-x1)*f+(rnd()-.5)*(w-1.5),y=y1+(y2-y1)*f+(rnd()-.5)*(w-1.5);o+=`<rect x="${(x-2).toFixed(1)}" y="${(y-2).toFixed(1)}" width="4" height="4" rx="1" fill="#000"/>`}}}
 const z5=(s,f)=>s.trim().split(' ').map(q=>{const[x,y]=q.split(',').map(Number);return f(155+x/3,85+y/3)}).join('');
 const z6=(s,f)=>s.trim().split(' ').map(q=>{const[x,y]=q.split(',').map(Number);return f(330+x/3,300+y/3)}).join('');
 const sq=c=>(x,y)=>`<rect x="${(x-2.6).toFixed(1)}" y="${(y-2.6).toFixed(1)}" width="5.200" height="5.200" fill="${c}" stroke="#052a66" stroke-width=".4"/>`;
 const sw=(x,y)=>`<rect x="${(x-1.8).toFixed(1)}" y="${(y-1.8).toFixed(1)}" width="3.600" height="3.600" fill="#1f66e0" stroke="#c5d8ff" stroke-width=".9"/>`;
 const cam=(x,y)=>`<circle cx="${x}" cy="${y}" r="1.800" fill="#000" stroke="#fff" stroke-width="1.100"/>`;
 const camb=(x,y)=>`<rect x="${x-5}" y="${y-4}" width="10" height="8" fill="#000"/>`+cam(x+1,y);
 o+='<g fill="none" stroke="#0ee0a5" stroke-width="1.800"><path d="M405 187l5 22 3 10 1 12M406 276l-1 12-12 8M416 290l-9 15-22 14-18 14M332 216v13M329 229h5M365 474l11-6 9-8M421 440l7 18"/></g>';
 o+=z5('791,358 800,404 783,380 774,325 757,255',camb)+z5('736,100 748,185 750,215 766,288',(x,y)=>cam(x,y))+z5('757,610 712,648 765,590',cam)+'<g>'+camb(379,412)+'</g>';
 o+='<path d="M400 107l3 6M401 115l4 4M404 150l2 9M406 172l4 7M409 180l5 8" stroke="#ddd" stroke-width="1" stroke-dasharray="1.500 1.200" fill="none"/>';
 const red='M392 103l2 6M389 117l-1 4M394 137l1 7M396 159l-1 8M398 170l2 9M303 180l13-3M295 193l10-7 17-4M338 173l8 0M352 178l6-7M354 179l7-8M340 183l6 2M268 201l8-2M213 194l8-2M167 204l6-3 4 2M244 193l12-4M337 215l-3 4M346 213l5 2M346 216l5-3M411 260l2 4';
 o+=`<path d="${red}" fill="none" stroke="#fff" stroke-width="3"/><path d="${red}" fill="none" stroke="#e82020" stroke-width="1.700"/><path d="M244 193l12-3M256 187v4" stroke="#e82020" stroke-width="1.500"/>`;
 const r2='M379 369l3 2M390 378l6 6M402 373l3 3M393 369l2 2M405 395l4 4M446 513l2 8M441 508l3 3M426 517l3-1';
 o+=`<path d="${r2}" fill="none" stroke="#fff" stroke-width="3.200" stroke-dasharray="3 1"/><path d="${r2}" stroke="#e82020" stroke-width="1.700" stroke-dasharray="2 .6" fill="none"/><path d="M367 170l12-2M420 432l3 10" stroke="#ddd" stroke-width="2.500"/><path d="M445 508l3 3" stroke="#20c030" stroke-width="2.500"/>`;
 o+=z5('712,68 706,78 684,107 712,245 690,250 680,258 738,275 736,380 780,485 780,500 765,535 762,548 776,622 728,667 492,274 540,265 532,278 532,288 162,330 225,322 232,320 105,367 130,364 150,362 165,356 178,352 190,358 227,363 245,370 275,370 328,350 556,387',sq('#1560e0'));
 o+=z5('728,240 742,298 784,463 758,562 787,588 740,624 728,657 686,690 128,350 213,361 400,337 408,337 752,584',sw)+z5('383,338 262,370 555,265 781,612',(x,y)=>`<rect x="${x-2}" y="${y-1.5}" width="4" height="3.500" fill="#f2ef43"/>`);
 o+='<path d="M404 211l8 1" stroke="#5b8ff0" stroke-width="2"/>';
 o+=z6('205,20 162,45 136,152 220,270 274,393 288,453 272,457 248,455 290,485 278,503 155,493 148,503 314,385 318,398 326,582 332,594 322,640',sq('#1560e0'));
 o+=z6('120,80 183,200 168,222 208,258 240,308 250,322 256,337 262,352 270,378 190,470 205,464 292,498 125,520 335,432',sw)+z6('120,135 163,182 240,240 160,178',(x,y)=>`<rect x="${x-1}" y="${y-1}" width="2.500" height="2" fill="#1a4fb0"/>`)+z6('230,460 286,317',(x,y)=>`<rect x="${x-2}" y="${y-2}" width="4" height="4" fill="#f2ef73"/>`);
 return `<style>:host{display:block;width:300px;height:453px;background:#fff;flex:none}svg{display:block}</style><svg width="300" height="453" viewBox="160 88 300 453">${o}</svg>`});

def('lamia-nav',()=>{
 const row=(i,n,w,s='')=>`<div class="r ${s}"><u></u>${ic(i,15.5)}${t(n,w)}</div>`, hd=(n,w)=>`<div class="h">${t(n,w)}</div>`;
 return `<style>:host{display:flex;flex-direction:column;width:226px;flex:none;margin-left:6px;padding-top:7px;box-sizing:border-box}
 .c{height:17px;border:1px solid #d0d0d0;box-sizing:border-box;display:flex;align-items:center;padding:0 1px 0 2px;gap:7px;flex:none}.c q-btn{margin-left:-5px}
 .t{margin-top:3px;height:186px;flex:none;border:1px solid #5da2d8;background:#fff;box-sizing:border-box}
 .r{height:17.300px;display:flex;align-items:center;padding-left:5px;gap:5px}.r u{width:5px;height:9px;border-left:1px solid #ddd;border-bottom:1px solid #ddd;margin-bottom:8px;box-sizing:border-box}.r q-icon{margin-left:-1.500px}
 .s{background:#0078d7;color:#fff}.s u{border-color:#5aa5e0}.h{height:8.700px;padding-left:2px;display:flex;align-items:center}
 .g{height:7px;display:flex;align-items:center;justify-content:center;flex:none}.g i{width:74px;height:2px;background:repeating-linear-gradient(90deg,#ccc 0 1px,transparent 1px 3px)}
 .l{display:flex;height:164px;flex:none;border:1px solid #b9b9b9;box-sizing:border-box;background:#fff}.m{flex:1}.hh{height:12px;background:linear-gradient(#fafafa,#eaeaea);border-bottom:1px solid #bbb;display:flex;align-items:center;padding-left:2px;box-sizing:border-box}
 .n{height:8.670px;display:flex;align-items:center;gap:2.500px;padding-left:5.500px}.n u{width:4px;border-top:1px solid #ccc}.n.f{background:#f0f0f0}</style>
 <div class="c">${ic('eye',11)}<q-combo w="185" h="13">&nbsp;${t('0_Defaut',28)}</q-combo><q-btn w="16" h="15">${ic('cal',12)}</q-btn></div>
 <div class="t">${hd('Desordre',28)}${row('warn','Desordre',28)}${hd('Description',35)}${row('equip','Equipement',37,'s')}${row('tron','Troncon',25)}${hd('Ressources',36)}${row('map','Fonds de plan',43)}${row('topo','Leves topographiques',67)}</div>
 <q-btn w="226" h="16" style="margin-top:3px">${ic('cursor',13)}</q-btn><div class="g"><i></i></div>
 <div class="l"><div class="m"><div class="hh">${t('ID',7)}</div><div class="n" style="padding-left:1px">${t('Equipement',37)}</div>${Array.from({length:16},(_,i)=>`<div class="n ${i?'':'f'}"><u></u>${t(i+1,i<9?4:8)}</div>`).join('')}</div><q-scroll thumb="15"></q-scroll></div>`});

def('lamia-props',()=>{
 const f=(n,w,h,c)=>`<div class="f" style="height:${h}px">${t(n,w)}<span></span>${c}</div>`;
 const cb=(w,n,x)=>`<q-combo w="${w}">${t(n,x)}</q-combo>`;
 return `<style>:host{display:flex;flex:1;margin-left:4px;padding-top:5px;box-sizing:border-box}
 .tabs{width:20px;flex:none;box-sizing:border-box;padding:8px 0 0 3px}.tab{width:16px;box-sizing:border-box;display:flex;flex-direction:column;align-items:center}.tab div{writing-mode:vertical-rl;transform:rotate(180deg);line-height:10px}
 .a{height:60px;gap:5px}.z{height:80px;border:1px solid #ccc;gap:3px;padding-top:6px;background:#ececec}
 .p{width:300px;height:396px;border:1px solid #d4d4d4;box-sizing:border-box;padding:9px 5px 0 2px;flex:none}
 .b{display:flex;align-items:center;height:100%;padding-left:2px}.f{display:flex;align-items:center}.f span{flex:1}
 .cm{height:107px;display:flex;align-items:center;padding-left:5px;gap:3px;box-sizing:border-box}.ta{width:225px;height:97px;background:#fff;border:1px solid #ccc;box-sizing:border-box}</style>
 <div class="tabs"><div class="tab a"><div>${t('Proprietes',32)}</div>${ic('tabi',13)}</div><div class="tab z"><div>${t('Tables enfants',43)}</div>${ic('chain',15)}</div></div>
 <div class="p">
 <q-group title="Elements" tw="31" style="height:28px"><div class="b" style="padding-top:2px"><q-combo w="127">${t('1',4)}</q-combo>
 <q-btn style="margin-left:4px">${t('Lk',7)}</q-btn><q-btn style="margin-left:4px">${ic('hilite',11)}</q-btn><q-btn style="margin-left:3px">${ic('line',11)}</q-btn><q-btn style="margin-left:3px">${ic('plus',11)}</q-btn><q-btn style="margin-left:5px">${ic('del',11)}</q-btn><q-btn style="margin-left:6px">${ic('forbid',12)}</q-btn><q-btn w="32" style="margin-left:6px">${ic('floppy',11)}</q-btn></div></q-group>
 <q-group title="Saisie geometrique" tw="66" style="height:26px;margin-top:6px"><div class="b" style="gap:3px;padding-top:2px;box-sizing:border-box">${['pts','vg','poly','addl','addlg'].map(n=>`<q-btn w="16.500">${ic(n,13)}</q-btn>`).join('')}<q-btn style="margin-left:3px">${ic('nodey',12)}</q-btn></div></q-group>
 <q-group title="Propriétés" tw="36" x="5" style="height:315px;margin-top:8px;padding:7px 3px 0 3px">
  <q-group style="height:72px;padding:4px 6px 0 6px">${f('Categorie',29,15.7,cb(133,'Lineaire - Hydrau enterre',77))}${f('Type',14,15.7,cb(133,'Canalisation (AEP,EU...)',71))}${f('Cote',13,15.7,cb(133,'Eau',12))}${f('Position',23,15.7,cb(133,'/',3))}</q-group>
  <q-group style="height:227px;border-top:0;padding:9px 0 0 0"><div style="padding:0 4px 0 5px">
  ${[['Implantation',37,'Enterre',22],['Ecoulement',35,'/',3],['Utilisation',29,'/',3]].map(r=>f(r[0],r[1],15.8,cb(125,r[2],r[3])+'<div style="width:20px"></div>')).join('')}
  ${f('Dimension verticale / Ø',71,19,`<q-spin w="125">${t('0,30',14)}</q-spin><q-btn h="16" style="margin-left:4px">${ic('tap',12)}</q-btn>`)}${f('Dimension horizontale',67,19.500,`<q-spin w="125">${t('-1,00',16)}</q-spin><q-btn h="16" style="margin-left:4px">${ic('tap',12)}</q-btn>`)}</div>
  <q-group style="height:108px;margin:9px 1px 0"><div class="cm">${t('Commentaire',41)}<div class="ta"></div></div></q-group></q-group>
 </q-group></div>`});

def('lamia-dock',()=>`<style>:host{display:block;width:563px;flex:none}.m{height:13px;display:flex;align-items:center;gap:8.500px;padding-left:5px;border-bottom:1px solid #d8d8d8;box-sizing:border-box}
 .b{display:flex;height:409px}.s{height:11px;display:flex;gap:2px;padding-top:0;box-sizing:border-box}.s div{border:1px solid #bbb;display:flex;align-items:center;overflow:hidden;box-sizing:border-box;padding-left:1px}</style>
 <q-dock title="Lamia_BD_totale_ind7.sqlite" tw="81" l="1.018" th="14"><div class="m">${t('Fichiers',24)}${t('Interface',27)}${t('Préférences',37)}${t('Aide',13)}</div>
 <div class="b"><lamia-nav></lamia-nav><lamia-props></lamia-props></div>
 <div class="s"><div style="width:473px">${t('Prestation inactif',52)}</div><div style="width:58px">${t('GPS non connecté',54)}</div><div style="width:31px">${t('Précision',26)}</div></div></q-dock>`);

def('status-bar',()=>`<style>:host{display:flex;height:13px;align-items:center;flex:none;background:#f0f0f0}.i{width:136px;height:11px;background:#fff;border:1px solid #d0d0d0;box-sizing:border-box;margin:0 3px 0 2px}</style>
 ${t('1 entité sélectionnée dans la couche Equipement.',151)}${t('Coordonnée',38,'style="margin-left:314px"')}<div class="i"></div>${ic('bug',10)}${t('Échelle',22,'style="margin:0 4px 0 8px"')}<q-combo w="52" white>${t('1:115 891',32)}</q-combo><span style="width:3px"></span>${ic('lock',9)}${t('Loupe',18,'style="margin:0 2px 0 9px"')}<q-spin w="43">${t('100%',18)}</q-spin>${t('Rotation',25,'style="margin:0 5px 0 5px"')}<q-spin w="43">${t('0,0',11)}</q-spin><span style="width:3px"></span>${ic('x',9)}${t('Rendu',20,'style="margin:0 9px 0 4px"')}${ic('crs',11)}${t('EPSG:3945',34,'style="margin:0 11px 0 2px"')}${ic('bubble',11)}`);

def('call-out',e=>{const[x,y,w,h]=A(e,'box').split(',');const[a,b]=A(e,'at').split(',');return `<style>:host{display:contents}.o{position:absolute;left:${x}px;top:${y}px;width:${w}px;height:${h}px;box-sizing:border-box;border:${A(e,'t',3)}px solid ${A(e,'c')}}
 .n{position:absolute;left:${a}px;top:${b}px;font:bold 24px/26px Lato,"Open Sans",sans-serif;color:${A(e,'c')};-webkit-text-stroke:.5px ${A(e,'c')}}</style><div class="o"></div><div class="n"><slot></slot></div>`});

def('qgis-window',()=>`<style>:host{display:flex;flex-direction:column;width:1029px;height:554px;position:relative;background:#f0f0f0;overflow:hidden}
 .t{height:15px;background:#fff;display:flex;align-items:center;flex:none;font:9px/11px "Open Sans",sans-serif;color:#222;gap:5px}.t fit-text{margin-top:-1px}.t b{flex:1}.w{display:flex;gap:23.500px;padding-right:18px;margin-top:-2px}
 .m{height:451px;display:flex;flex:none}.d{width:131px;display:flex;flex-direction:column;flex:none}.r{position:absolute;right:0;top:0;width:3px;height:554px;background:#fff}.mid{width:3px;flex:none}.mid2{width:3px}
 map-canvas{margin-top:-2px}</style>
 <div class="t">${ic('logo',7,11)}${t('QGIS 2.18.19',44)}<b></b><div class="w">${ic('min',8)}${ic('max',8)}${ic('close',8)}</div></div>
 <menu-bar></menu-bar><main-toolbar></main-toolbar><edit-toolbar></edit-toolbar><extra-toolbar></extra-toolbar>
 <div class="m"><layer-strip></layer-strip><div class="d">
 <q-dock title="Explorateur" tw="33" style="height:243px"><tool-row h="15" s="10" gap="5" icons="pg refresh funnel collapse info2"></tool-row><explorer-tree></explorer-tree></q-dock>
 <q-dock title="Couches" tw="25" style="height:204px;padding-top:2px"><tool-row h="15" s="10" gap="5.500" icons="brush group eyed funnel expr expand collapse rem"></tool-row><layers-tree></layers-tree></q-dock></div>
 <div class="mid"></div><map-canvas></map-canvas><div class="mid2"></div><lamia-dock></lamia-dock></div>
 <status-bar></status-bar><div class="r"></div>
 <call-out box="159,88,301,453" t="3.500" c="#ff0000" at="190,113">1</call-out>
 <call-out box="463,88,563,453" c="#76b04b" at="960,91">2</call-out>
 <call-out box="469,147,226,185" c="#ed7d31" at="663,153">3</call-out>
 <call-out box="469,369,214,156" c="#7030a0" at="643,378">4</call-out>
 <call-out box="698,123,319,402" t="3.500" c="#4472c4" at="981,166">5</call-out>
 <call-out box="463,101,143,17" t="3.500" c="#000000" at="619,97">6</call-out>`);

/* Sets letter spacing so a label occupies exactly its declared width. */
customElements.define('fit-text',class extends HTMLElement{
 connectedCallback(){
  if(this.shadowRoot) return;
  const w=+this.getAttribute('w'),n=this.textContent.length;
  this.attachShadow({mode:'open'}).innerHTML='<style>:host{display:inline-block;flex:none;white-space:nowrap}span{display:inline-block;white-space:pre}</style><span><slot></slot></span>';
  const s=this.shadowRoot.querySelector('span'),r=s.getBoundingClientRect(),m=Math.max(r.width,r.height>r.width&&getComputedStyle(this).writingMode!='horizontal-tb'?r.height:0);
  if(m) s.style.letterSpacing=((w-m)/n).toFixed(3)+'px';
 }
});
</script>
</body>
</html>
